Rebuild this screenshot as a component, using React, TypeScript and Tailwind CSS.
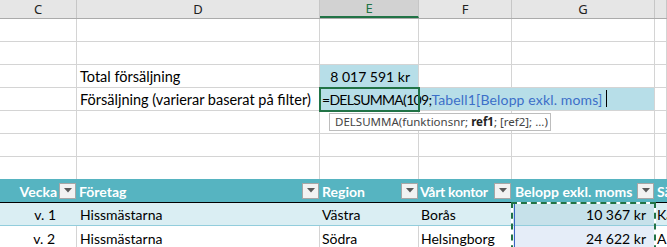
import React from 'react';

const cols = ['w-[77px]', 'w-[243px]', 'w-[99px]', 'w-[93px]', 'w-[143px]', 'w-[12px]'];

const FilterButton = () => (
  <span className="w-[17px] h-[16px] shrink-0 bg-[#f2f2f2] border border-[#a6a6a6] flex items-center justify-center">
    <svg width="8" height="5" viewBox="0 0 8 5">
      <path d="M0 0 L8 0 L4 4.5 Z" fill="#595959" />
    </svg>
  </span>
);

const EmptyRow = ({ last = false }: { last?: boolean }) => (
  <div className={`flex ${last ? 'h-[22px]' : 'h-[23px] border-b border-[#d4d4d4]'}`}>
    {cols.map((w) => (
      <div key={w} className={`${w} shrink-0 h-full border-r border-[#d4d4d4]`} />
    ))}
  </div>
);

const headers = ['C', 'D', 'E', 'F', 'G', ''];

export default function App() {
  return (
    <div className="relative w-[667px] h-[247px] overflow-hidden bg-white text-black font-['Lato',sans-serif] text-[14px] leading-none">
      {/* column letters */}
      <div className="flex h-[19px] bg-[#e6e6e6] border-b border-[#ababab] font-['Noto_Sans',sans-serif] text-[13px] text-[#222]">
        {headers.map((h, i) => (
          <div
            key={i}
            className={`${cols[i]} shrink-0 h-full border-r border-[#c6c6c6] flex items-center justify-center ${
              h === 'E' ? 'bg-[#d2d2d2] text-[#217346] border-b-2 border-b-[#217346]' : ''
            }`}
          >
            {h}
          </div>
        ))}
      </div>

      <EmptyRow />
      <EmptyRow />

      {/* Total */}
      <div className="flex h-[23px] border-b border-[#d4d4d4]">
        <div className={`${cols[0]} shrink-0 border-r border-[#d4d4d4]`} />
        <div className={`${cols[1]} shrink-0 border-r border-[#d4d4d4] flex items-end pb-[3px] pl-[3px] text-[14.5px]`}>
          Total försäljning
        </div>
        <div className={`${cols[2]} shrink-0 border-r border-[#d4d4d4] bg-[#b7dee8] flex items-end justify-end pb-[3px] pr-[8px]`}>
          8 017 591 kr
        </div>
        <div className={`${cols[3]} shrink-0 border-r border-[#d4d4d4]`} />
        <div className={`${cols[4]} shrink-0 border-r border-[#d4d4d4]`} />
        <div className={`${cols[5]} shrink-0 border-r border-[#d4d4d4]`} />
      </div>

      {/* Försäljning */}
      <div className="flex h-[23px] border-b border-[#d4d4d4]">
        <div className={`${cols[0]} shrink-0 border-r border-[#d4d4d4]`} />
        <div className={`${cols[1]} shrink-0 border-r border-[#d4d4d4] flex items-end pb-[3px] pl-[3px] text-[14.5px]`}>
          Försäljning (varierar baserat på filter)
        </div>
        <div className="w-[335px] shrink-0 border-r border-[#d4d4d4] bg-[#b7dee8] flex items-end pb-[3px] pl-[2px] whitespace-nowrap">
          <span className="tracking-[-0.7px]">=DELSUMMA(109;</span>
          <span className="text-[#3c6fc8] tracking-[0.15px]">Tabell1[Belopp exkl. moms]</span>
          <span className="ml-[4px] w-px h-[17px] bg-black" />
        </div>
        <div className={`${cols[5]} shrink-0 border-r border-[#d4d4d4]`} />
      </div>

      <EmptyRow />
      <EmptyRow />
      <EmptyRow last />

      {/* table header */}
      <div className="flex h-[24px] bg-[#56b4c1] border-b border-black text-white font-bold whitespace-nowrap">
        <div className={`${cols[0]} shrink-0 flex items-center justify-end gap-[2px] pr-[1px]`}>
          <span className="pt-[2px]">Vecka</span>
          <FilterButton />
        </div>
        <div className={`${cols[1]} shrink-0 flex items-center justify-between pl-[2px] pr-[1px]`}>
          <span className="pt-[2px]">Företag</span>
          <FilterButton />
        </div>
        <div className={`${cols[2]} shrink-0 flex items-center justify-between pl-[2px] pr-[1px]`}>
          <span className="pt-[2px]">Region</span>
          <FilterButton />
        </div>
        <div className={`${cols[3]} shrink-0 flex items-center justify-between pl-[1px] pr-[1px]`}>
          <span className="pt-[2px] tracking-[-0.3px]">Vårt kontor</span>
          <FilterButton />
        </div>
        <div className={`${cols[4]} shrink-0 flex items-center justify-between pl-[3px] pr-[1px]`}>
          <span className="pt-[2px]">Belopp exkl. moms</span>
          <FilterButton />
        </div>
        <div className={`${cols[5]} shrink-0 flex items-center pl-[2px] overflow-hidden`}>
          <span className="pt-[2px]">Sä</span>
        </div>
      </div>

      {/* data rows */}
      {[
        { v: 'v. 1', f: 'Hissmästarna', r: 'Västra', k: 'Borås', b: '10 367 kr', s: 'Ka', band: true },
        { v: 'v. 2', f: 'Hissmästarna', r: 'Södra', k: 'Helsingborg', b: '24 622 kr', s: 'A', band: false },
      ].map((row) => {
        const line = row.band ? '' : 'border-r border-[#d4d4d4]';
        return (
          <div
            key={row.v}
            className={`flex h-[23px] whitespace-nowrap ${row.band ? 'bg-[#daeef3] border-b border-[#92cddc]' : 'bg-white'}`}
          >
            <div className={`${cols[0]} shrink-0 ${line} flex items-end justify-end pb-[3px] pr-[21px]`}>{row.v}</div>
            <div className={`${cols[1]} shrink-0 ${line} flex items-end pb-[3px] pl-[3px]`}>{row.f}</div>
            <div className={`${cols[2]} shrink-0 ${line} flex items-end pb-[3px] pl-[2px]`}>{row.r}</div>
            <div className={`${cols[3]} shrink-0 ${line} flex items-end pb-[3px] pl-[2px]`}>{row.k}</div>
            <div
              className={`${cols[4]} shrink-0 flex items-end justify-end pb-[3px] pr-[9px] ${
                row.band ? 'bg-[#c6e1ea]' : 'bg-[#e5edf8]'
              }`}
            >
              {row.b}
            </div>
            <div className={`${cols[5]} shrink-0 flex items-end pb-[3px] pl-[2px] overflow-hidden`}>{row.s}</div>
          </div>
        );
      })}

      {/* active cell border */}
      <div className="absolute left-[319px] top-[87px] w-[101px] h-[25px] border-2 border-[#217346]" />

      {/* function tooltip */}
      <div className="absolute left-[329px] top-[113px] w-[222px] h-[18px] bg-white border border-[#bdbdbd] flex items-center pl-[5px] font-['Noto_Sans',sans-serif] text-[11.5px] text-[#444] whitespace-nowrap">
        DELSUMMA(funktionsnr;&nbsp;<b className="text-[#222]">ref1</b>; [ref2]; ...)
      </div>

      {/* copy marquee */}
      <div className="absolute left-[511px] top-[202px] w-[145px] h-[60px] border-2 border-white">
        <div className="absolute inset-[-2px] border-2 border-dashed border-[#217346]" />
        <div className="absolute left-[1px] top-0 bottom-0 w-px bg-[#3a63c4]" />
      </div>
    </div>
  );
}
